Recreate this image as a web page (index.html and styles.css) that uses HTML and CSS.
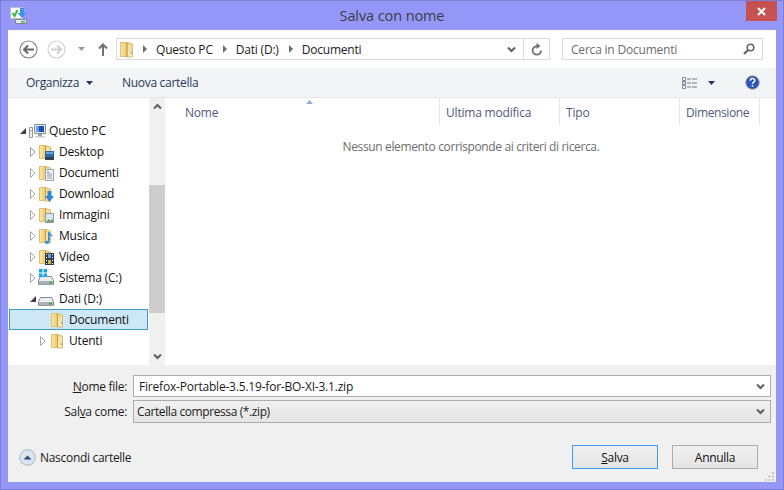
FILE: index.html
```html
<!DOCTYPE html>
<html lang="it">
<head>
    <meta charset="UTF-8">
    <title>Salva con nome</title>
    <link rel="stylesheet" href="styles.css">
</head>
<body>
    <svg class="defs" width="0" height="0">
        <defs>
            <linearGradient id="fold-back" x1="0" y1="0" x2="1" y2="0">
                <stop offset="0" stop-color="#fbe9ad"/>
                <stop offset="1" stop-color="#eec766"/>
            </linearGradient>
            <linearGradient id="fold-front" x1="0" y1="0" x2="0" y2="1">
                <stop offset="0" stop-color="#f3d88f"/>
                <stop offset="1" stop-color="#fbeeb8"/>
            </linearGradient>
        </defs>
        <symbol id="folder" viewBox="0 0 12 16">
            <path d="M.500 1.500h6v13h-6z" fill="url(#fold-back)" stroke="#dcc078"/>
            <path d="M6.500 1.500l5 1.500v12h-5z" fill="url(#fold-front)" stroke="#d8bb70"/>
            <path d="M6.500 1.500v13.500" stroke="#c79f45"/>
            <path d="M10 10h1v2h-1z" fill="#6fa8d8"/>
        </symbol>
        <symbol id="open" viewBox="0 0 10 10"><path d="M2.500.500l4.500 4.500-4.500 4.500z" fill="#fff" stroke="#a6a6a6"/></symbol>
        <symbol id="down" viewBox="0 0 10 10"><path d="M8 2v6H2z" fill="#404040"/></symbol>
        <symbol id="chev" viewBox="0 0 9 7"><path d="M1 1.500l3.500 3.500 3.500-3.500" fill="none" stroke="#5f5f5f" stroke-width="2"/></symbol>
        <symbol id="drive" viewBox="0 0 16 9">
            <path d="M2.500.500h11l2 4v4H.500v-4z" fill="#eceef0" stroke="#858b91"/>
            <path d="M1 5h14v3.500H1z" fill="#aab2b9"/>
            <path d="M11 5.500h3v2h-3z" fill="#3fae4a"/>
        </symbol>
    </svg>

    <div class="window">
        <div class="titlebar">
            <svg class="app-icon" width="17" height="17" viewBox="0 0 17 17">
                <path d="M.500.500h12v11H.500z" fill="#fff" stroke="#b9c2cc"/>
                <path d="M2.500 6l2 3 3-6" fill="none" stroke="#3fb53f" stroke-width="2"/>
                <path d="M10 1h4v5h2.500l-4.500 5-4.500-5H10z" fill="#3d95dc"/>
                <path d="M5.500 12.500h11v4h-11z" fill="#e8eaec" stroke="#7f8890"/>
                <path d="M11 14h4v1.500h-4z" fill="#46b046"/>
            </svg>
            <span class="title">Salva con nome</span>
            <div class="close">
                <svg width="9" height="9" viewBox="0 0 9 9"><path d="M1 1l7 7M8 1l-7 7" stroke="#fff" stroke-width="2"/></svg>
            </div>
        </div>

        <div class="content">
            <div class="nav">
                <svg class="nav-btn" width="19" height="19" viewBox="0 0 19 19">
                    <circle cx="9.500" cy="9.500" r="8.500" fill="#fff" stroke="#8a8a8a" stroke-width="1.200"/>
                    <path d="M15 9.500H5M9 5.500l-4 4 4 4" fill="none" stroke="#666" stroke-width="2"/>
                </svg>
                <svg class="nav-btn fwd" width="19" height="19" viewBox="0 0 19 19">
                    <circle cx="9.500" cy="9.500" r="8.500" fill="#fff" stroke="#d0d0d0" stroke-width="1.200"/>
                    <path d="M4 9.500h10M10 5.500l4 4-4 4" fill="none" stroke="#cfcfcf" stroke-width="2"/>
                </svg>
                <svg class="nav-drop" width="7" height="4" viewBox="0 0 7 4"><path d="M0 0h7L3.500 4z" fill="#9a9a9a"/></svg>
                <svg class="nav-up" width="10" height="13" viewBox="0 0 10 13"><path d="M5 13V2M1 5.500l4-4 4 4" fill="none" stroke="#707070" stroke-width="2"/></svg>

                <div class="address">
                    <svg class="addr-folder" width="13" height="17"><use href="#folder"/></svg>
                    <span class="crumb-arrow"></span>
                    <span class="crumb">Questo PC</span>
                    <span class="crumb-arrow"></span>
                    <span class="crumb">Dati (D:)</span>
                    <span class="crumb-arrow"></span>
                    <span class="crumb">Documenti</span>
                    <span class="addr-chev"><svg width="9" height="7"><use href="#chev"/></svg></span>
                    <span class="addr-refresh">
                        <svg width="12" height="13" viewBox="0 0 12 13"><path d="M10 7.500A4.200 4.200 0 1 1 6 3.300" fill="none" stroke="#707070" stroke-width="1.800"/><path d="M5.500 0l4 3-4 3z" fill="#707070"/></svg>
                    </span>
                </div>

                <div class="search">
                    <span>Cerca in Documenti</span>
                    <svg width="12" height="12" viewBox="0 0 12 12"><circle cx="7.500" cy="4.500" r="3.300" fill="none" stroke="#666" stroke-width="1.600"/><path d="M5 7l-4 4" stroke="#666" stroke-width="2.200"/></svg>
                </div>
            </div>

            <div class="toolbar">
                <span class="tool">Organizza</span>
                <svg class="tool-arrow" width="7" height="4" viewBox="0 0 7 4"><path d="M0 0h7L3.500 4z" fill="#1e395b"/></svg>
                <span class="tool new-folder">Nuova cartella</span>
                <svg class="view-icon" width="15" height="12" viewBox="0 0 15 12">
                    <path d="M.500.500h3v3h-3zM.500 4.500h3v3h-3zM.500 8.500h3v3h-3z" fill="#fff" stroke="#7a8ba0"/>
                    <path d="M5 2h4M10 2h5M5 6h4M10 6h5M5 10h4M10 10h5" stroke="#6d7686"/>
                    <path d="M1.500 5.500h1v1h-1z" fill="#d03030"/>
                </svg>
                <svg class="view-arrow" width="7" height="4" viewBox="0 0 7 4"><path d="M0 0h7L3.500 4z" fill="#1e395b"/></svg>
                <svg class="help" width="15" height="15" viewBox="0 0 15 15">
                    <circle cx="7.500" cy="7.500" r="6.800" fill="#2a56b8" stroke="#a5a9b0"/>
                    <path d="M5.300 5.800c0-3 4.500-3 4.500-.3 0 1.700-2.300 1.700-2.300 3.500" fill="none" stroke="#fff" stroke-width="1.500"/>
                    <path d="M6.700 10h1.600v1.600H6.700z" fill="#fff"/>
                </svg>
            </div>

            <div class="main">
                <div class="tree">
                    <div class="row lvl0">
                        <svg class="twist" width="10" height="10"><use href="#down"/></svg>
                        <svg class="row-icon" width="17" height="16" viewBox="0 0 17 16">
                            <path d="M.500 4.500h3v10h-3z" fill="#eef0f2" stroke="#8f969c"/>
                            <path d="M1.500 7h1v1h-1z" fill="#4cb04c"/>
                            <path d="M5.500 1.500h11v9h-11z" fill="#e9ecef" stroke="#858d95"/>
                            <path d="M7 3h8v6H7z" fill="#1c50c0"/>
                            <path d="M7 3h3v6H7z" fill="#6f9ae0"/>
                            <path d="M9 11h4v2H9z" fill="#9aa4ad"/>
                            <path d="M6.500 13h9v1.500h-9z" fill="#c5cbd0"/>
                        </svg>
                        <span>Questo PC</span>
                    </div>
                    <div class="row lvl1">
                        <svg class="twist" width="10" height="10"><use href="#open"/></svg>
                        <span class="row-icon stack">
                            <svg width="12" height="16"><use href="#folder"/></svg>
                            <svg class="badge" width="9" height="9" viewBox="0 0 9 9"><path d="M0 0h9v6H0z" fill="#2c6aa8"/><path d="M1 1h7v2H1z" fill="#6ba3d8"/><path d="M0 6h9v3H0z" fill="#33404d"/></svg>
                        </span>
                        <span>Desktop</span>
                    </div>
                    <div class="row lvl1">
                        <svg class="twist" width="10" height="10"><use href="#open"/></svg>
                        <span class="row-icon stack">
                            <svg width="12" height="16"><use href="#folder"/></svg>
                            <svg class="badge" width="9" height="12" viewBox="0 0 9 12"><path d="M.500.500h8v11h-8z" fill="#f4f6f8" stroke="#98a2ac"/><path d="M2 3h2" stroke="#3f86d0"/><path d="M2 5h5M2 7h5M2 9h5" stroke="#8a98a8"/></svg>
                        </span>
                        <span>Documenti</span>
                    </div>
                    <div class="row lvl1">
                        <svg class="twist" width="10" height="10"><use href="#open"/></svg>
                        <span class="row-icon stack">
                            <svg width="12" height="16"><use href="#folder"/></svg>
                            <svg class="badge" width="9" height="11" viewBox="0 0 9 11"><path d="M2.500 0h4v5H9l-4.500 6L0 5h2.500z" fill="#2e8ad8"/></svg>
                        </span>
                        <span>Download</span>
                    </div>
                    <div class="row lvl1">
                        <svg class="twist" width="10" height="10"><use href="#open"/></svg>
                        <span class="row-icon stack">
                            <svg width="12" height="16"><use href="#folder"/></svg>
                            <svg class="badge" width="9" height="10" viewBox="0 0 9 10"><path d="M.500.500h8v9h-8z" fill="#d6e8f4" stroke="#8f99a3"/><path d="M1 9l2.500-3 2 1.500L8 6v3z" fill="#6fa36f"/></svg>
                        </span>
                        <span>Immagini</span>
                    </div>
                    <div class="row lvl1">
                        <svg class="twist" width="10" height="10"><use href="#open"/></svg>
                        <span class="row-icon stack">
                            <svg width="12" height="16"><use href="#folder"/></svg>
                            <svg class="badge" width="8" height="12" viewBox="0 0 8 12"><path d="M3 0h1.500c0 2 3.500 2.500 3 5C7 4 5.500 3.800 4.500 3.500V10c0 2-4.500 2.500-4.500.500C0 9 2 8.500 3 9z" fill="#2d8fd8"/></svg>
                        </span>
                        <span>Musica</span>
                    </div>
                    <div class="row lvl1">
                        <svg class="twist" width="10" height="10"><use href="#open"/></svg>
                        <span class="row-icon stack">
                            <svg width="12" height="16"><use href="#folder"/></svg>
                            <svg class="badge" width="9" height="12" viewBox="0 0 9 12"><path d="M0 0h9v12H0z" fill="#2f3d4c"/><path d="M1 1h1v1H1zM1 4h1v1H1zM1 7h1v1H1zM1 10h1v1H1zM7 1h1v1H7zM7 4h1v1H7zM7 7h1v1H7zM7 10h1v1H7z" fill="#fff"/><path d="M3 1h3v4H3z" fill="#6aa6d8"/><path d="M3 7h3v4H3z" fill="#d8b45a"/></svg>
                        </span>
                        <span>Video</span>
                    </div>
                    <div class="row lvl1">
                        <svg class="twist" width="10" height="10"><use href="#open"/></svg>
                        <span class="row-icon stack">
                            <svg class="drive-low" width="16" height="9"><use href="#drive"/></svg>
                            <svg class="win" width="8" height="8" viewBox="0 0 8 8"><path d="M0 0h3.500v3.500H0zM4.500 0H8v3.500H4.500zM0 4.500h3.500V8H0zM4.500 4.500H8V8H4.500z" fill="#16a8e8"/></svg>
                        </span>
                        <span>Sistema (C:)</span>
                    </div>
                    <div class="row lvl1">
                        <svg class="twist" width="10" height="10"><use href="#down"/></svg>
                        <span class="row-icon stack">
                            <svg class="drive-low" width="16" height="9"><use href="#drive"/></svg>
                        </span>
                        <span>Dati (D:)</span>
                    </div>
                    <div class="row lvl2 selected">
                        <span class="twist"></span>
                        <svg class="row-icon" width="12" height="16"><use href="#folder"/></svg>
                        <span>Documenti</span>
                    </div>
                    <div class="row lvl2">
                        <svg class="twist" width="10" height="10"><use href="#open"/></svg>
                        <svg class="row-icon" width="12" height="16"><use href="#folder"/></svg>
                        <span>Utenti</span>
                    </div>
                </div>

                <div class="scrollbar">
                    <div class="sb-btn"><svg class="flip" width="9" height="7"><use href="#chev"/></svg></div>
                    <div class="sb-track">
                        <div class="sb-thumb"></div>
                    </div>
                    <div class="sb-btn"><svg width="9" height="7"><use href="#chev"/></svg></div>
                </div>

                <div class="list">
                    <div class="columns">
                        <div class="col col-name">Nome<svg class="sort" width="7" height="4" viewBox="0 0 7 4"><path d="M0 4L3.500 0 7 4z" fill="#8fb4cc"/></svg></div>
                        <div class="col col-date">Ultima modifica</div>
                        <div class="col col-type">Tipo</div>
                        <div class="col col-size">Dimensione</div>
                    </div>
                    <p class="empty">Nessun elemento corrisponde ai criteri di ricerca.</p>
                </div>
            </div>

            <div class="footer">
                <div class="field">
                    <label class="field-label"><u>N</u>ome file:</label>
                    <div class="input">
                        <span>Firefox-Portable-3.5.19-for-BO-XI-3.1.zip</span>
                        <svg width="9" height="7"><use href="#chev"/></svg>
                    </div>
                </div>
                <div class="field">
                    <label class="field-label">Sal<u>v</u>a come:</label>
                    <div class="input select">
                        <span>Cartella compressa (*.zip)</span>
                        <svg width="9" height="7"><use href="#chev"/></svg>
                    </div>
                </div>
                <div class="actions">
                    <svg class="hide-icon" width="17" height="17" viewBox="0 0 17 17">
                        <circle cx="8.500" cy="8.500" r="7.800" fill="#dbe5f0" stroke="#aab4c0"/>
                        <path d="M4.500 10.500l4-4 4 4z" fill="#2b4a78"/>
                    </svg>
                    <span class="hide-label">Nascondi cartelle</span>
                    <button class="btn default" type="button"><u>S</u>alva</button>
                    <button class="btn" type="button">Annulla</button>
                </div>
                <svg class="grip" width="10" height="9" viewBox="0 0 10 9"><path d="M7 0h2v2H7zM3.500 3.500h2v2h-2zM7 3.500h2v2H7zM0 7h2v2H0zM3.500 7h2v2h-2zM7 7h2v2H7z" fill="#c4c4c4"/></svg>
            </div>
        </div>
    </div>
</body>
</html>
```

FILE: styles.css
```css
* {
    box-sizing: border-box;
}

html, body {
    margin: 0;
    padding: 0;
}

body {
    width: 784px;
    height: 490px;
    overflow: hidden;
    font-family: 'Open Sans', 'Noto Sans', sans-serif;
    font-size: 12px;
    letter-spacing: -0.2px;
    color: #1b1b1b;
}

svg {
    display: block;
    flex: none;
}

.defs {
    position: absolute;
}

.window {
    position: relative;
    width: 784px;
    height: 490px;
    display: flex;
    flex-direction: column;
    padding: 0 7px 7px;
    background-color: #9497f8;
    border: 1px solid #7d7fd6;
}

.titlebar {
    height: 29px;
    display: flex;
    align-items: center;
    justify-content: center;
}

.app-icon {
    position: absolute;
    left: 9px;
    top: 6px;
}

.title {
    font-size: 14.500px;
    letter-spacing: -0.1px;
    color: #3c3c46;
}

.close {
    position: absolute;
    right: 6px;
    top: 0;
    width: 31px;
    height: 20px;
    display: flex;
    align-items: center;
    justify-content: center;
    background-color: #c75050;
}

.content {
    flex: 1;
    display: flex;
    flex-direction: column;
    min-height: 0;
    background-color: #fff;
}

.nav {
    height: 38px;
    flex: none;
    display: flex;
    align-items: center;
    padding-left: 11px;
}

.fwd {
    margin-left: 9px;
}

.nav-drop {
    margin-left: 12px;
}

.nav-up {
    margin-left: 13px;
}

.address {
    width: 434px;
    height: 22px;
    margin-left: 8px;
    display: flex;
    align-items: center;
    padding-left: 3px;
    border: 1px solid #d9d9d9;
}

.crumb-arrow {
    width: 0;
    height: 0;
    margin: 0 9px 0 10px;
    border-left: 4px solid #6d6d6d;
    border-top: 4px solid transparent;
    border-bottom: 4px solid transparent;
}

.addr-chev {
    margin-left: auto;
    width: 24px;
    height: 20px;
    display: flex;
    align-items: center;
    justify-content: center;
    border-right: 1px solid #d9d9d9;
}

.addr-refresh {
    width: 25px;
    display: flex;
    justify-content: center;
}

.search {
    width: 201px;
    height: 22px;
    margin-left: 12px;
    display: flex;
    align-items: center;
    justify-content: space-between;
    padding: 0 7px 0 8px;
    border: 1px solid #d9d9d9;
    color: #6d6d6d;
}

.toolbar {
    height: 30px;
    flex: none;
    display: flex;
    align-items: center;
    padding-left: 18px;
    background-color: #f3f4f6;
    border-bottom: 1px solid #e6e8eb;
}

.tool {
    color: #1e395b;
    letter-spacing: -0.3px;
}

.tool-arrow {
    margin-left: 7px;
}

.new-folder {
    margin-left: 29px;
}

.view-icon {
    margin-left: auto;
}

.view-arrow {
    margin-left: 11px;
}

.help {
    margin: 0 16px 0 30px;
}

.main {
    height: 267px;
    flex: none;
    display: flex;
}

.tree {
    width: 141px;
    padding-top: 22px;
}

.row {
    height: 21px;
    display: flex;
    align-items: center;
    margin: 0 1px 0 1px;
    border: 1px solid transparent;
    color: #111;
}

.lvl0 {
    padding-left: 7px;
}

.lvl1 {
    padding-left: 17px;
}

.lvl2 {
    padding-left: 27px;
}

.selected {
    background-color: #cce8f6;
    border-color: #3f9bcb;
}

.twist {
    width: 12px;
    flex: none;
}

.row-icon {
    width: 16px;
    margin-right: 4px;
    flex: none;
}

.lvl0 .row-icon {
    width: 17px;
    margin-right: 3px;
}

.stack {
    position: relative;
    height: 16px;
}

.badge {
    position: absolute;
    left: 6px;
    bottom: 0;
}

.drive-low {
    position: absolute;
    left: -1px;
    bottom: 1px;
}

.win {
    position: absolute;
    left: 0;
    top: -1px;
}

.scrollbar {
    width: 16px;
    display: flex;
    flex-direction: column;
    background-color: #f0f0f0;
}

.sb-btn {
    height: 17px;
    display: flex;
    align-items: center;
    justify-content: center;
}

.flip {
    transform: rotate(180deg);
}

.sb-track {
    flex: 1;
    padding-top: 70px;
}

.sb-thumb {
    height: 128px;
    background-color: #cdcdcd;
}

.list {
    flex: 1;
    margin-left: 1px;
}

.columns {
    height: 27px;
    display: flex;
    color: #4f5b7d;
}

.col {
    position: relative;
    padding: 6px 0 0 6px;
    border-right: 1px solid #e5e5e5;
}

.col-name {
    width: 274px;
    padding-left: 19px;
}

.col-date {
    width: 120px;
}

.col-type {
    width: 120px;
}

.col-size {
    width: 80px;
    letter-spacing: -0.4px;
}

.sort {
    position: absolute;
    left: 140px;
    top: 2px;
}

.empty {
    margin: 13px 0 0;
    text-align: center;
    color: #6d6d6d;
    letter-spacing: -0.36px;
}

.footer {
    position: relative;
    flex: 1;
    padding: 10px 5px 0 0;
    background-color: #f0f0f0;
    letter-spacing: -0.3px;
}

.field {
    display: flex;
    align-items: center;
    margin-bottom: 3px;
}

.field-label {
    width: 125px;
    padding-right: 6px;
    text-align: right;
}

.input {
    flex: 1;
    height: 22px;
    display: flex;
    align-items: center;
    justify-content: space-between;
    padding: 0 5px 0 5px;
    background-color: #fff;
    border: 1px solid #acacac;
    letter-spacing: -0.2px;
}

.select {
    height: 23px;
    padding-left: 3px;
    background: linear-gradient(#f0f0f0, #e5e5e5);
    letter-spacing: -0.4px;
}

.actions {
    display: flex;
    align-items: center;
    margin-top: 22px;
    padding-left: 11px;
}

.hide-label {
    margin-left: 4px;
    margin-right: auto;
}

.btn {
    width: 86px;
    height: 24px;
    margin-right: 13px;
    padding: 0;
    font: inherit;
    letter-spacing: inherit;
    color: #111;
    background: linear-gradient(#f0f0f0, #e5e5e5);
    border: 1px solid #acacac;
}

.default {
    margin-right: 14px;
    border-color: #3c9bef;
}

.grip {
    position: absolute;
    right: 1px;
    bottom: 1px;
}
```
